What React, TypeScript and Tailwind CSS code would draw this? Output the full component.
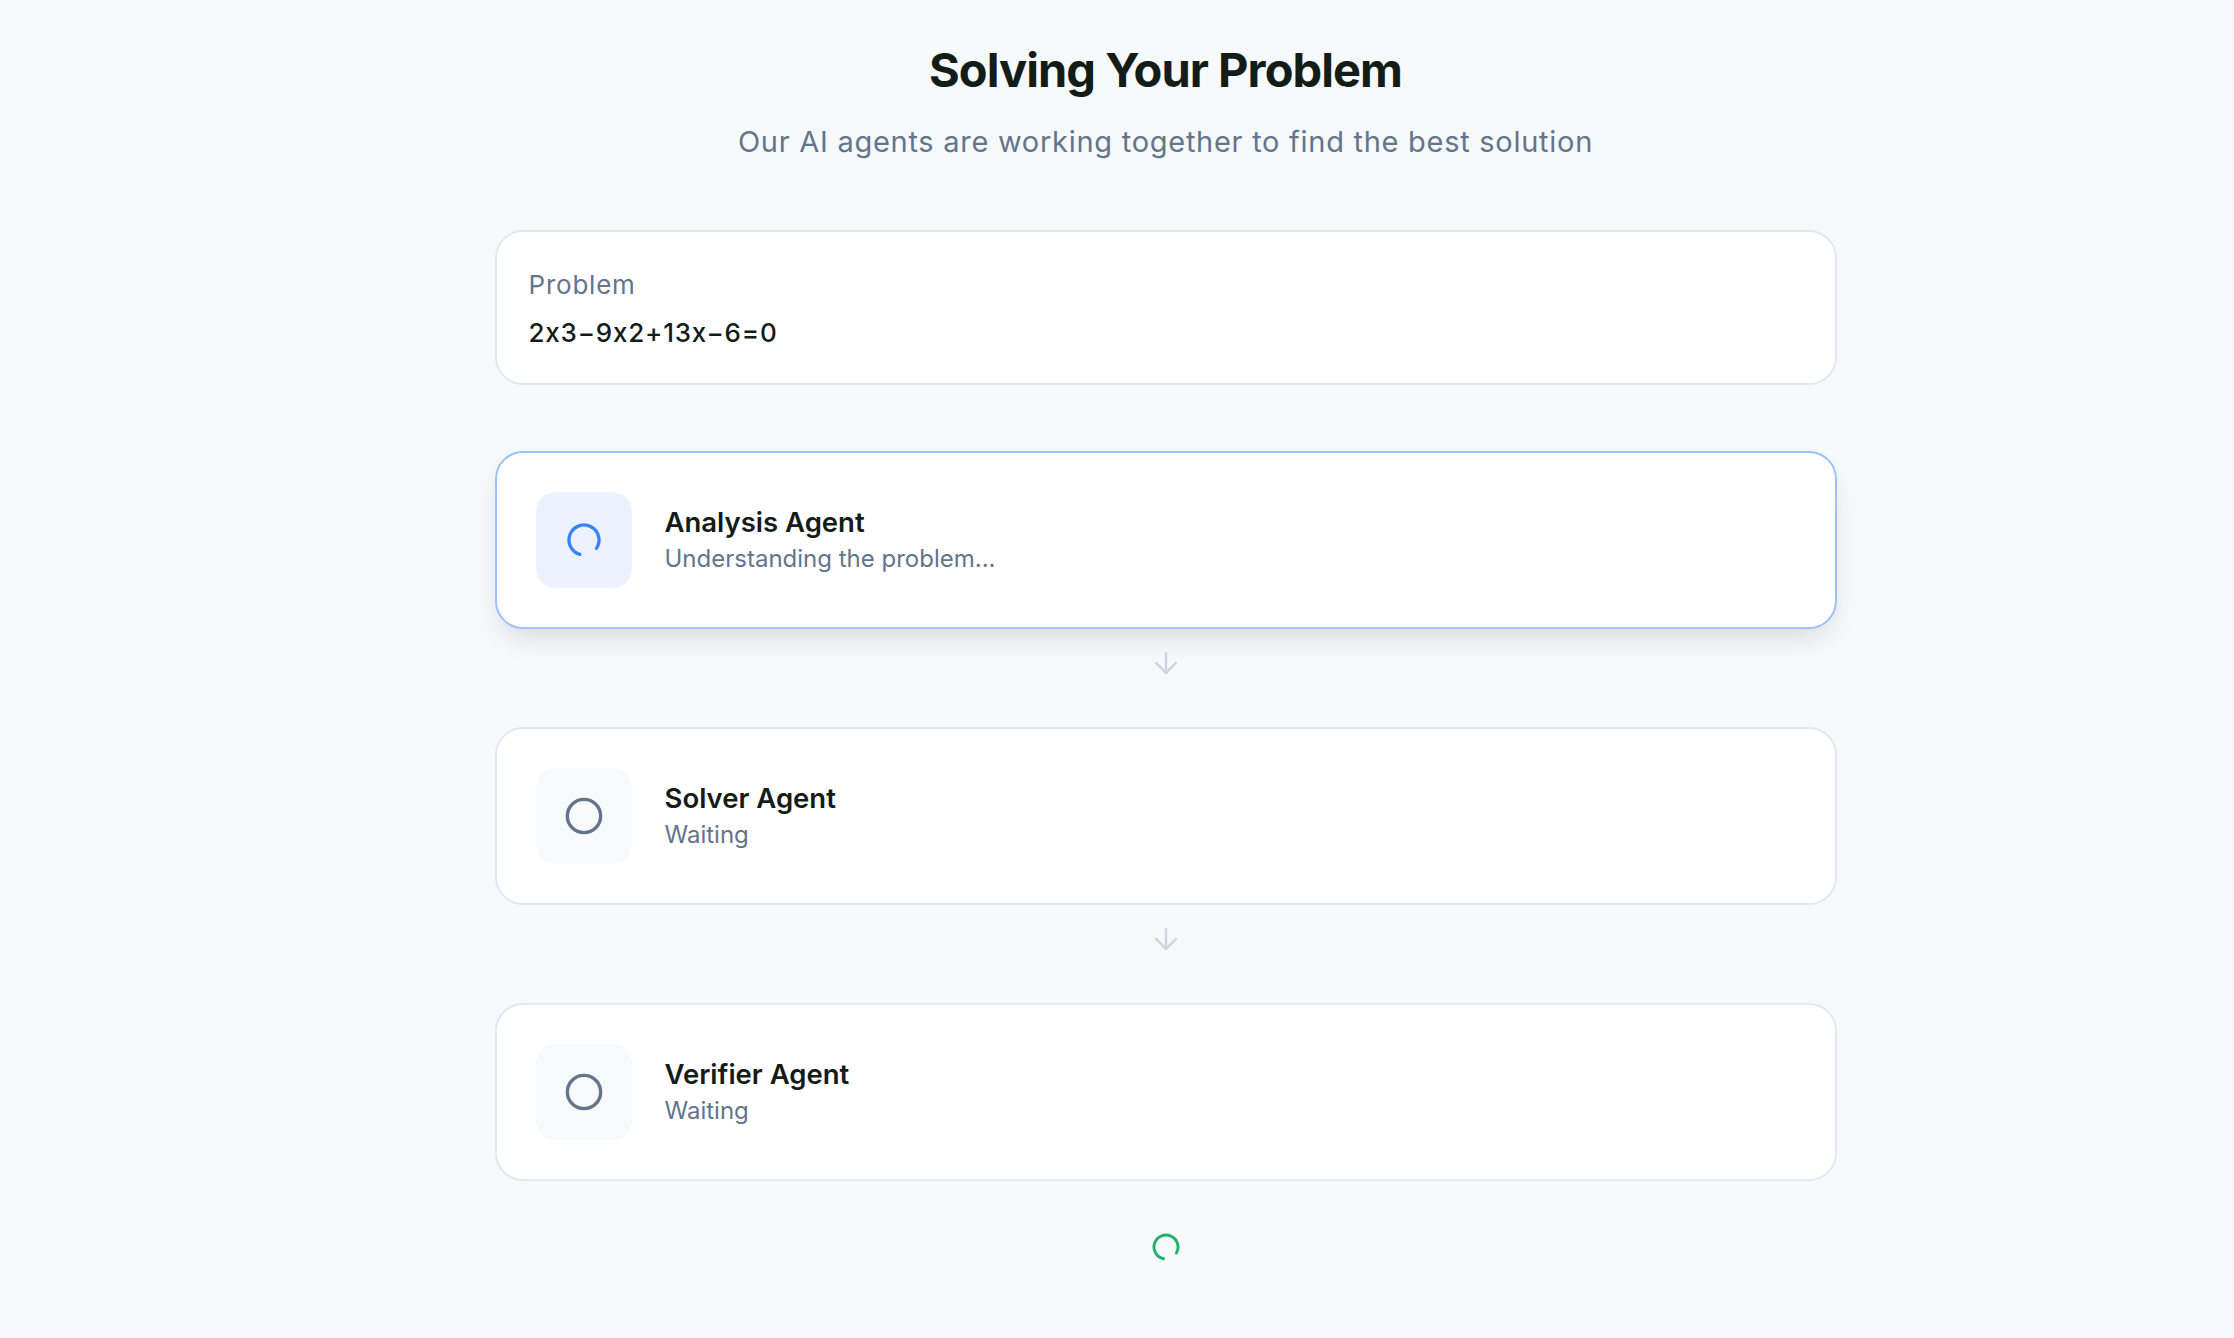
import {ArrowDown, Circle, LoaderCircle} from 'lucide-react'

type Agent = {
  name: string
  status: string
  active: boolean
}

const agents: Agent[] = [
  {name: 'Analysis Agent', status: 'Understanding the problem...', active: true},
  {name: 'Solver Agent', status: 'Waiting', active: false},
  {name: 'Verifier Agent', status: 'Waiting', active: false},
]

function AgentCard({agent}: {agent: Agent}) {
  return (
    <div
      className={
        agent.active
          ? 'flex items-center gap-[33px] rounded-[28px] border-2 border-[#9cc2f9] bg-white p-[39px] shadow-[0_14px_28px_-8px_rgba(15,23,42,0.14)]'
          : 'flex items-center gap-[33px] rounded-[28px] border-2 border-[#e3e8f0] bg-white p-[39px]'
      }
    >
      <div
        className={
          agent.active
            ? 'flex h-[96px] w-[96px] shrink-0 items-center justify-center rounded-[20px] bg-[#ebf2fe]'
            : 'flex h-[96px] w-[96px] shrink-0 items-center justify-center rounded-[20px] bg-[#f7f9fb]'
        }
      >
        {agent.active ? (
          <LoaderCircle size={40} strokeWidth={2} className="rotate-[106deg] text-[#3b82f6]" />
        ) : (
          <Circle size={40} strokeWidth={2} className="text-[#64748b]" />
        )}
      </div>
      <div className="flex flex-col">
        <span className="text-[27.5px] font-semibold leading-[36px] text-[#141c18]">{agent.name}</span>
        <span className="mt-[2px] text-[24px] leading-[34px] text-[#64748b]">{agent.status}</span>
      </div>
    </div>
  )
}

export default function App() {
  return (
    <div className="min-h-screen bg-[#f6f9fa] pl-[97px] font-['Inter',sans-serif] [font-feature-settings:'calt'_0]">
      <div className="mx-auto flex w-[1342px] flex-col pt-[41px]">
        <h1 className="text-center text-[47px] font-bold leading-[58px] tracking-[-0.02em] text-[#141c18]">
          Solving Your Problem
        </h1>
        <p className="mt-[23px] text-center text-[29px] leading-[40px] tracking-[0.025em] text-[#64748b]">
          Our AI agents are working together to find the best solution
        </p>

        <div className="mt-[68px] rounded-[28px] border-2 border-[#e3e8f0] bg-white px-[32px] pb-[32px] pt-[35px]">
          <div className="text-[26px] leading-[36px] tracking-[0.03em] text-[#64748b]">Problem</div>
          <div className="mt-[12px] text-[26px] font-medium leading-[36px] tracking-[0.03em] text-[#141c18]">
            2x3−9x2+13x−6=0
          </div>
        </div>

        <div className="mt-[66px] flex flex-col">
          {agents.map((agent, i) => (
            <div key={agent.name} className="flex flex-col">
              <AgentCard agent={agent} />
              {i < agents.length - 1 && (
                <div className="flex h-[98px] justify-center pt-[17px]">
                  <ArrowDown size={34} strokeWidth={1.7} className="text-[#cbd5e1]" />
                </div>
              )}
            </div>
          ))}
        </div>

        <div className="flex justify-center pt-[50px] pb-[60px]">
          <LoaderCircle size={32} strokeWidth={2.2} className="rotate-[102deg] text-[#21b26c]" />
        </div>
      </div>
    </div>
  )
}
